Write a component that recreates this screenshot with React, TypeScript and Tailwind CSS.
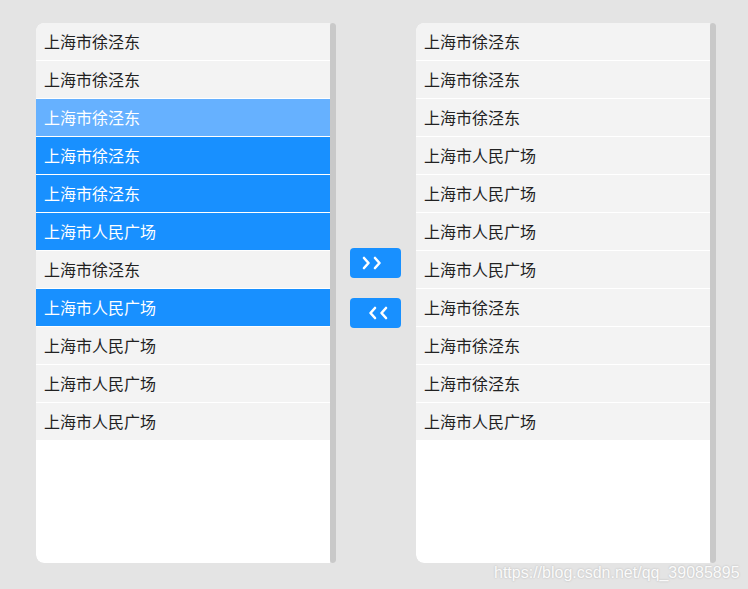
import React from "react";

const left: { t: string; s: 0 | 1 | 2 }[] = [
  { t: "上海市徐泾东", s: 0 },
  { t: "上海市徐泾东", s: 0 },
  { t: "上海市徐泾东", s: 2 },
  { t: "上海市徐泾东", s: 1 },
  { t: "上海市徐泾东", s: 1 },
  { t: "上海市人民广场", s: 1 },
  { t: "上海市徐泾东", s: 0 },
  { t: "上海市人民广场", s: 1 },
  { t: "上海市人民广场", s: 0 },
  { t: "上海市人民广场", s: 0 },
  { t: "上海市人民广场", s: 0 },
];

const right: { t: string; s: 0 | 1 | 2 }[] = [
  "上海市徐泾东",
  "上海市徐泾东",
  "上海市徐泾东",
  "上海市人民广场",
  "上海市人民广场",
  "上海市人民广场",
  "上海市人民广场",
  "上海市徐泾东",
  "上海市徐泾东",
  "上海市徐泾东",
  "上海市人民广场",
].map((t) => ({ t, s: 0 as const }));

function Panel({ items }: { items: { t: string; s: 0 | 1 | 2 }[] }) {
  return (
    <div className="flex h-[540px] w-[300px] overflow-hidden rounded-l-[8px] rounded-r-[3px]">
      <div className="flex w-[294px] flex-col rounded-l-[8px] bg-white overflow-hidden">
        {items.map((it, i) => (
          <div
            key={i}
            className={
              "flex h-[38px] shrink-0 items-center border-b border-white pb-[2px] pl-[8px] text-[16px] " +
              (it.s === 1
                ? "bg-[#1890ff] text-white"
                : it.s === 2
                ? "bg-[#66b1ff] text-white"
                : "bg-[#f3f3f3] text-[#222]")
            }
          >
            {it.t}
          </div>
        ))}
      </div>
      <div className="w-[6px] rounded-t-[3px] rounded-b-[3px] bg-[#c9c9c9]" />
    </div>
  );
}

function Chevrons({ dir }: { dir: "r" | "l" }) {
  return (
    <svg width="22" height="14" viewBox="0 0 22 14" fill="none">
      {dir === "r" ? (
        <g stroke="white" strokeWidth="2.6" strokeLinecap="round" strokeLinejoin="round">
          <path d="M3 2 L7.5 7 L3 12" />
          <path d="M14 2 L18.5 7 L14 12" />
        </g>
      ) : (
        <g stroke="white" strokeWidth="2.6" strokeLinecap="round" strokeLinejoin="round">
          <path d="M8 2 L3.5 7 L8 12" />
          <path d="M19 2 L14.5 7 L19 12" />
        </g>
      )}
    </svg>
  );
}

export default function App() {
  return (
    <div
      className="relative h-[589px] w-[748px] bg-[#e4e4e4]"
      style={{ fontFamily: '"Noto Sans CJK SC", "Noto Sans", sans-serif' }}
    >
      <div className="flex items-center pl-[36px] pt-[23px]">
        <Panel items={left} />
        <div className="ml-[14px] mr-[15px] flex flex-col gap-[20px] pb-[10px]">
          <button className="flex h-[30px] w-[51px] items-center justify-center rounded-[4px] bg-[#1890ff] pr-[8px]">
            <Chevrons dir="r" />
          </button>
          <button className="flex h-[30px] w-[51px] items-center justify-center rounded-[4px] bg-[#1890ff] pl-[4px]">
            <Chevrons dir="l" />
          </button>
        </div>
        <Panel items={right} />
      </div>
      <div
        className="absolute left-[494px] top-[561px] text-[16px] text-white"
        style={{ fontFamily: '"Liberation Sans", Arial, sans-serif', textShadow: "0 0 2px rgba(0,0,0,0.25)", opacity: 0.85 }}
      >
        https://blog.csdn.net/qq_39085895
      </div>
    </div>
  );
}
